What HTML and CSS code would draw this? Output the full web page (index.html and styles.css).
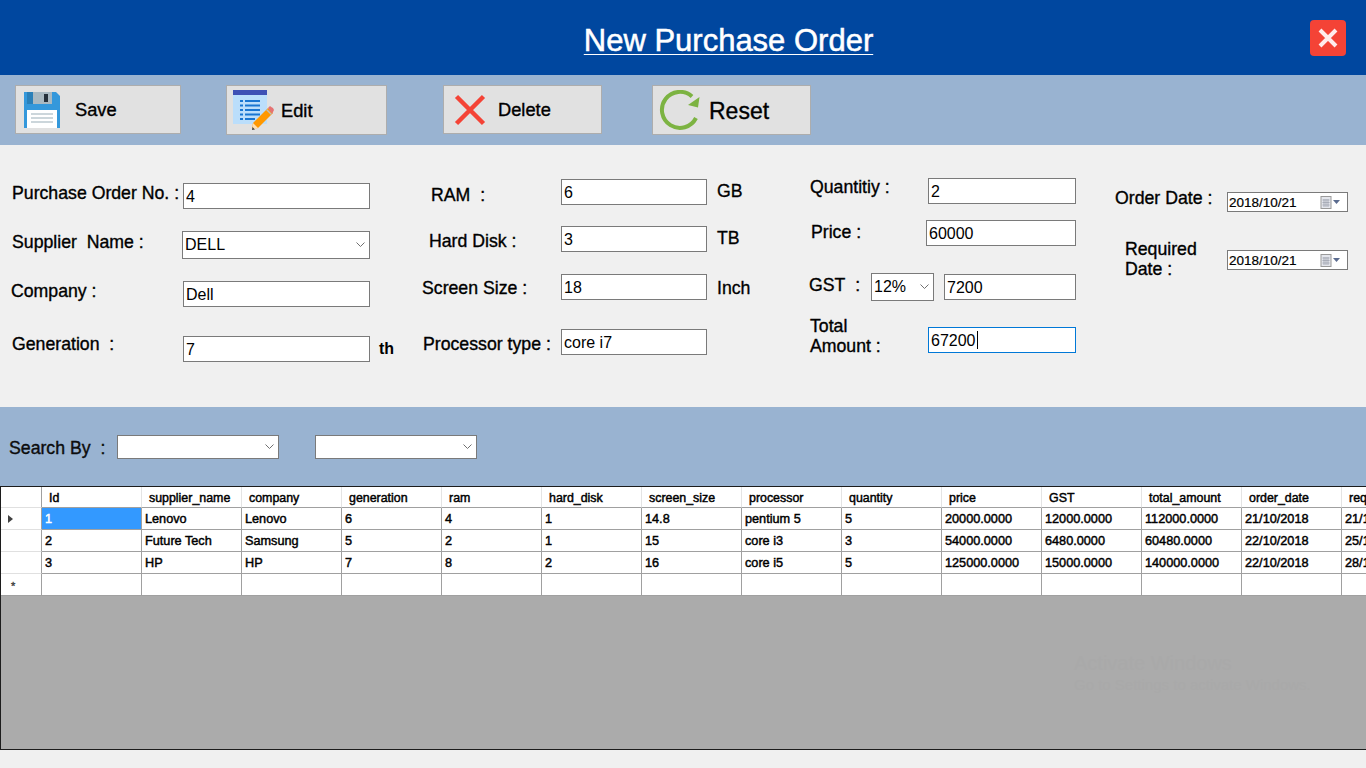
FILE: index.html
```html
<!DOCTYPE html>
<html lang="en">
<head>
    <meta charset="UTF-8">
    <meta name="viewport" content="width=device-width, initial-scale=1.0">
    <title>New Purchase Order</title>
    <link rel="stylesheet" href="styles.css">
</head>
<body>

    <header class="title-bar">
        <h1>New Purchase Order</h1>
        <button type="button" class="close-btn" aria-label="Close">
            <svg width="36" height="36" viewBox="0 0 36 36"><path d="M10 10 L26 26 M26 10 L10 26" stroke="#ffecec" stroke-width="4" fill="none"/></svg>
        </button>
    </header>

    <div class="toolbar">
        <button type="button" class="tool-btn btn-save">
            <svg width="36" height="36" viewBox="0 0 36 36">
                <path d="M0 0 H32 L36 4 V36 H0 Z" fill="#3498db"/>
                <rect x="3" y="0" width="6" height="12" fill="#2a80b9"/>
                <rect x="9" y="0" width="19" height="12" fill="#a9b9c2"/>
                <rect x="20" y="2" width="4" height="8" fill="#25303b"/>
                <rect x="3" y="18" width="30" height="18" fill="#fff"/>
                <path d="M7 22 H29 M7 26 H29 M7 30 H29" stroke="#ccd6db" stroke-width="2"/>
            </svg>
            <span>Save</span>
        </button>
        <button type="button" class="tool-btn btn-edit">
            <svg width="41" height="40" viewBox="0 0 41 40">
                <rect x="0" y="0" width="34" height="34" fill="#bbdefb"/>
                <rect x="0" y="0" width="34" height="5" fill="#3f51b5"/>
                <path d="M7 11 H10 M12 11 H27 M7 15.500 H10 M12 15.500 H27 M7 20 H10 M12 20 H27 M7 24.500 H10 M12 24.500 H27 M7 29 H10 M12 29 H22" stroke="#1976d2" stroke-width="2"/>
                <path d="M19 39 L20 33 L35 18 L40 23 L25 38 Z" fill="#ff9800"/>
                <path d="M35 18 L37 16 Q38 17 40 18 L41 20 L39 24 Z" fill="#e57373"/>
                <path d="M34 19 L39 24 L38 25 L33 20 Z" fill="#bdbdbd"/>
                <path d="M19 40 L20 33 L25 38 Z" fill="#ffe0b2"/>
                <path d="M19 40 L19.500 37 L22 39.500 Z" fill="#424242"/>
            </svg>
            <span>Edit</span>
        </button>
        <button type="button" class="tool-btn btn-delete">
            <svg width="32" height="32" viewBox="0 0 32 32"><path d="M2.500 2.500 L29.500 29.500 M29.500 2.500 L2.500 29.500" stroke="#f44336" stroke-width="4.500" fill="none"/></svg>
            <span>Delete</span>
        </button>
        <button type="button" class="tool-btn btn-reset">
            <svg width="42" height="41" viewBox="0 0 42 41">
                <path d="M33 6.500 A18 18 0 1 0 37 28" stroke="#7cb342" stroke-width="4" fill="none"/>
                <path d="M40.500 7 L39 17.500 L29 15 Z" fill="#7cb342"/>
            </svg>
            <span>Reset</span>
        </button>
    </div>

    <form class="form-panel">
        <div class="col col-1">
            <div class="field row-po">
                <label>Purchase Order No. :</label>
                <input class="textbox" type="text" value="4" readonly>
            </div>
            <div class="field row-supplier">
                <label>Supplier&nbsp; Name :</label>
                <div class="combo"><span>DELL</span>
                    <svg class="chev" width="9" height="6" viewBox="0 0 9 6"><path d="M0.500 0.500 L4.500 4.500 L8.500 0.500" stroke="#707070" fill="none"/></svg>
                </div>
            </div>
            <div class="field row-company">
                <label>Company :</label>
                <input class="textbox" type="text" value="Dell" readonly>
            </div>
            <div class="field row-generation">
                <label>Generation&nbsp; :</label>
                <input class="textbox" type="text" value="7" readonly>
                <span class="unit">th</span>
            </div>
        </div>

        <div class="col col-2">
            <div class="field row-ram">
                <label>RAM&nbsp; :</label>
                <input class="textbox" type="text" value="6" readonly>
                <span class="unit">GB</span>
            </div>
            <div class="field row-disk">
                <label>Hard Disk :</label>
                <input class="textbox" type="text" value="3" readonly>
                <span class="unit">TB</span>
            </div>
            <div class="field row-screen">
                <label>Screen Size :</label>
                <input class="textbox" type="text" value="18" readonly>
                <span class="unit">Inch</span>
            </div>
            <div class="field row-processor">
                <label>Processor type :</label>
                <input class="textbox" type="text" value="core i7" readonly>
            </div>
        </div>

        <div class="col col-3">
            <div class="field row-qty">
                <label>Quantitiy :</label>
                <input class="textbox" type="text" value="2" readonly>
            </div>
            <div class="field row-price">
                <label>Price :</label>
                <input class="textbox" type="text" value="60000" readonly>
            </div>
            <div class="field row-gst">
                <label>GST&nbsp; :</label>
                <div class="combo combo-gst"><span>12%</span>
                    <svg class="chev" width="9" height="6" viewBox="0 0 9 6"><path d="M0.500 0.500 L4.500 4.500 L8.500 0.500" stroke="#707070" fill="none"/></svg>
                </div>
                <input class="textbox" type="text" value="7200" readonly>
            </div>
            <div class="field row-total">
                <label>Total<br>Amount :</label>
                <div class="textbox focused">67200<span class="caret"></span></div>
            </div>
        </div>

        <div class="col col-4">
            <div class="field row-order">
                <label>Order Date :</label>
                <div class="datebox"><span>2018/10/21</span>
                    <svg width="21" height="13" viewBox="0 0 21 13">
                        <rect x="1" y="0.500" width="10" height="12" fill="#e4e6ec" stroke="#9a9a9a"/>
                        <path d="M2.500 4 H9.500 M2.500 6.500 H9.500 M2.500 9 H9.500 M4 3 V11 M6 3 V11 M8 3 V11" stroke="#a9adb8"/>
                        <path d="M13 4 H20 L16.500 8 Z" fill="#5a6b8f"/>
                    </svg>
                </div>
            </div>
            <div class="field row-required">
                <label>Required<br>Date :</label>
                <div class="datebox"><span>2018/10/21</span>
                    <svg width="21" height="13" viewBox="0 0 21 13">
                        <rect x="1" y="0.500" width="10" height="12" fill="#e4e6ec" stroke="#9a9a9a"/>
                        <path d="M2.500 4 H9.500 M2.500 6.500 H9.500 M2.500 9 H9.500 M4 3 V11 M6 3 V11 M8 3 V11" stroke="#a9adb8"/>
                        <path d="M13 4 H20 L16.500 8 Z" fill="#5a6b8f"/>
                    </svg>
                </div>
            </div>
        </div>
    </form>

    <div class="search-bar">
        <label>Search By&nbsp; :</label>
        <div class="combo combo-search">
            <svg class="chev" width="9" height="6" viewBox="0 0 9 6"><path d="M0.500 0.500 L4.500 4.500 L8.500 0.500" stroke="#707070" fill="none"/></svg>
        </div>
        <div class="combo combo-search">
            <svg class="chev" width="9" height="6" viewBox="0 0 9 6"><path d="M0.500 0.500 L4.500 4.500 L8.500 0.500" stroke="#707070" fill="none"/></svg>
        </div>
    </div>

    <div class="grid-wrap">
        <table class="grid">
            <thead>
                <tr>
                    <th class="row-head"></th>
                    <th>Id</th><th>supplier_name</th><th>company</th><th>generation</th><th>ram</th><th>hard_disk</th><th>screen_size</th><th>processor</th><th>quantity</th><th>price</th><th>GST</th><th>total_amount</th><th>order_date</th><th>required_date</th>
                </tr>
            </thead>
            <tbody>
                <tr>
                    <td class="row-head"><span class="row-arrow"></span></td>
                    <td class="selected">1</td><td>Lenovo</td><td>Lenovo</td><td>6</td><td>4</td><td>1</td><td>14.8</td><td>pentium 5</td><td>5</td><td>20000.0000</td><td>12000.0000</td><td>112000.0000</td><td>21/10/2018</td><td>21/10/2018</td>
                </tr>
                <tr>
                    <td class="row-head"></td>
                    <td>2</td><td>Future Tech</td><td>Samsung</td><td>5</td><td>2</td><td>1</td><td>15</td><td>core i3</td><td>3</td><td>54000.0000</td><td>6480.0000</td><td>60480.0000</td><td>22/10/2018</td><td>25/10/2018</td>
                </tr>
                <tr>
                    <td class="row-head"></td>
                    <td>3</td><td>HP</td><td>HP</td><td>7</td><td>8</td><td>2</td><td>16</td><td>core i5</td><td>5</td><td>125000.0000</td><td>15000.0000</td><td>140000.0000</td><td>22/10/2018</td><td>28/10/2018</td>
                </tr>
                <tr>
                    <td class="row-head star">*</td>
                    <td></td><td></td><td></td><td></td><td></td><td></td><td></td><td></td><td></td><td></td><td></td><td></td><td></td><td></td>
                </tr>
            </tbody>
        </table>
        <div class="watermark">
            <div class="wm-big">Activate Windows</div>
            <div class="wm-small">Go to Settings to activate Windows.</div>
        </div>
    </div>

    <div class="footer-strip"></div>

</body>
</html>
```

FILE: styles.css
```css
* {
    box-sizing: border-box;
}

body {
    font-family: "Liberation Sans", Arial, sans-serif;
    margin: 0;
    height: 768px;
    overflow: hidden;
    display: flex;
    flex-direction: column;
    background-color: #f0f0f0;
    color: #000;
}

/* top blue title */
.title-bar {
    height: 75px;
    flex: none;
    background-color: #00479f;
    position: relative;
    display: flex;
    justify-content: center;
    padding-left: 91px;
}

.title-bar h1 {
    margin: 23px 0 0;
    font-size: 31px;
    line-height: 36px;
    font-weight: normal;
    color: #fff;
    text-decoration: underline;
    text-decoration-thickness: 1px;
    text-underline-offset: 3px;
    -webkit-text-stroke: 0.5px #fff;
}

.close-btn {
    position: absolute;
    left: 1310px;
    top: 20px;
    width: 36px;
    height: 36px;
    padding: 0;
    border: none;
    border-radius: 4px;
    background-color: #f44336;
}

.close-btn svg {
    display: block;
}

/* toolbar */
.toolbar {
    height: 70px;
    flex: none;
    background-color: #99b3d1;
    display: flex;
    align-items: flex-start;
    padding: 10px 0 0 15px;
}

.tool-btn {
    display: flex;
    align-items: center;
    padding: 0;
    height: 50px;
    font-family: inherit;
    font-size: 18.300px;
    color: #000;
    background-color: #e1e1e1;
    border: 1px solid #adadad;
    -webkit-text-stroke: 0.35px #000;
}

.tool-btn svg {
    flex: none;
}

.btn-save {
    width: 166px;
    height: 49px;
    padding-left: 8px;
}

.btn-save span {
    margin-left: 15px;
}

.btn-edit {
    width: 161px;
    margin-left: 45px;
    padding-left: 6px;
}

.btn-edit span {
    margin-left: 7px;
    padding-top: 2px;
}

.btn-delete {
    width: 159px;
    height: 49px;
    margin-left: 56px;
    padding-left: 10px;
}

.btn-delete span {
    margin-left: 12px;
}

.btn-reset {
    width: 159px;
    margin-left: 50px;
    padding-left: 6px;
    font-size: 23px;
}

.btn-reset span {
    margin-left: 8px;
    padding-top: 2px;
}

/* form area */
.form-panel {
    height: 262px;
    flex: none;
    display: flex;
    align-items: flex-start;
    background-color: #f0f0f0;
}

.field {
    display: flex;
    align-items: flex-start;
}

.field label,
.search-bar label {
    flex: none;
    font-size: 17.700px;
    line-height: 20px;
    -webkit-text-stroke: 0.35px #000;
}

.textbox {
    display: block;
    height: 26px;
    padding: 3px 2px 1px;
    font-family: inherit;
    font-size: 16px;
    line-height: 20px;
    color: #000;
    background-color: #fff;
    border: 1px solid #7a7a7a;
    border-radius: 0;
    outline: none;
}

.textbox.focused {
    border-color: #0078d7;
}

.caret {
    display: inline-block;
    width: 1px;
    height: 18px;
    margin-left: 1px;
    vertical-align: -3px;
    background-color: #000;
}

.combo {
    display: flex;
    align-items: center;
    justify-content: space-between;
    height: 28px;
    padding: 0 4px 0 2px;
    font-size: 16px;
    background-color: #fff;
    border: 1px solid #7a7a7a;
}

.chev {
    flex: none;
}

.unit {
    font-size: 17.700px;
    line-height: 20px;
    -webkit-text-stroke: 0.3px #000;
}

/* column 1 */
.col-1 {
    width: 415px;
    padding-top: 38px;
}

.col-1 label {
    width: 183px;
    padding-left: 12px;
}

.col-1 .textbox {
    width: 187px;
}

.row-supplier {
    margin-top: 22px;
}

.row-supplier label {
    margin-top: 1px;
    width: 182px;
}

.row-supplier .combo {
    width: 188px;
}

.row-company {
    margin-top: 22px;
}

.col-1 .row-company label {
    padding-left: 11px;
}

.row-generation {
    margin-top: 29px;
}

.row-generation label {
    margin-top: -2px;
}

.row-generation .unit {
    margin: 3px 0 0 9px;
    font-weight: bold;
    -webkit-text-stroke: 0;
    font-size: 16px;
}

/* column 2 */
.col-2 {
    width: 395px;
    padding-top: 34px;
}

.col-2 .textbox {
    width: 146px;
}

.col-2 label {
    width: 146px;
}

.col-2 .unit {
    margin-left: 10px;
}

.row-ram label {
    padding-left: 16px;
    margin-top: 6px;
}

.row-ram .unit {
    margin-top: 2px;
}

.row-disk {
    margin-top: 21px;
}

.row-disk label {
    padding-left: 14px;
    margin-top: 5px;
}

.row-disk .unit {
    margin-top: 2px;
}

.row-screen {
    margin-top: 22px;
}

.row-screen label {
    padding-left: 7px;
    margin-top: 4px;
}

.row-screen .unit {
    margin-top: 4px;
}

.row-processor {
    margin-top: 29px;
}

.row-processor label {
    padding-left: 8px;
    margin-top: 5px;
}

/* column 3 */
.col-3 {
    width: 305px;
    padding-top: 33px;
}

.col-3 label {
    width: 118px;
}

.col-3 .textbox {
    width: 148px;
}

.row-qty label {
    margin-top: -1px;
}

.row-price {
    margin-top: 16px;
}

.row-price label {
    width: 116px;
    padding-left: 1px;
    margin-top: 2px;
}

.col-3 .row-price .textbox {
    width: 150px;
}

.row-gst {
    margin-top: 27px;
}

.row-gst label {
    width: 62px;
    margin: 2px 0 0 -1px;
}

.combo-gst {
    width: 63px;
}

.col-3 .row-gst .textbox {
    width: 132px;
    margin: 1px 0 0 10px;
}

.row-total {
    margin-top: 26px;
}

.row-total label {
    margin-top: -11px;
}

/* column 4 */
.col-4 {
    flex: 1;
    padding-top: 47px;
}

.col-4 label {
    width: 112px;
    padding-left: 10px;
}

.row-order label {
    padding-left: 0;
    margin-top: -4px;
}

.row-required {
    margin-top: 38px;
}

.row-required label {
    margin-top: -11px;
}

.datebox {
    display: flex;
    align-items: center;
    justify-content: space-between;
    width: 121px;
    height: 20px;
    padding: 0 6px 0 1px;
    font-size: 13.500px;
    background-color: #fff;
    border: 1px solid #7a7a7a;
    -webkit-text-stroke: 0.2px #000;
}

/* search strip */
.search-bar {
    height: 79px;
    flex: none;
    display: flex;
    align-items: flex-start;
    padding: 28px 0 0 9px;
    background-color: #99b3d1;
}

.search-bar label {
    width: 108px;
    margin-top: 3px;
    color: #111;
}

.combo-search {
    width: 162px;
    height: 24px;
    justify-content: flex-end;
}

.combo-search + .combo-search {
    margin-left: 36px;
}

/* data grid */
.grid-wrap {
    height: 264px;
    flex: none;
    position: relative;
    overflow: hidden;
    background-color: #ababab;
    border: 1px solid #1c1c1c;
    border-right: none;
}

.grid {
    table-layout: fixed;
    width: 1441px;
    border-collapse: separate;
    border-spacing: 0;
    background-color: #fff;
    font-size: 12.700px;
    -webkit-text-stroke: 0.45px #000;
}

.grid th,
.grid td {
    width: 100px;
    height: 22px;
    padding: 0 0 0 3px;
    text-align: left;
    font-weight: normal;
    white-space: nowrap;
    overflow: hidden;
    border-right: 1px solid #a0a0a0;
    border-bottom: 1px solid #a0a0a0;
}

.grid th {
    height: 21px;
    padding: 1px 0 0 7px;
    font-size: 12.400px;
    border-right-color: #e4e4e4;
    border-bottom-color: #a0a0a0;
}

.grid .row-head {
    width: 41px;
    padding: 0;
    position: relative;
    border-right-color: #a0a0a0;
    border-bottom-color: #e0e0e0;
}

.grid td.selected {
    background-color: #3399ff;
    color: #fff;
    -webkit-text-stroke: 0.45px #fff;
}

.row-arrow {
    display: block;
    width: 0;
    height: 0;
    margin-left: 7px;
    border-left: 5px solid #404040;
    border-top: 4px solid transparent;
    border-bottom: 4px solid transparent;
}

.grid .star {
    padding: 2px 0 0 10px;
    font-size: 11px;
    color: #404040;
    -webkit-text-stroke: 0.35px #404040;
    border-bottom-color: #a0a0a0;
}

.watermark {
    position: absolute;
    left: 1073px;
    top: 164px;
    color: #a9a9a9;
    white-space: nowrap;
}

.wm-big {
    font-size: 20px;
    line-height: 24px;
}

.wm-small {
    font-size: 15px;
    line-height: 20px;
}

.footer-strip {
    flex: 1;
    background-color: #f0f0f0;
}
```
